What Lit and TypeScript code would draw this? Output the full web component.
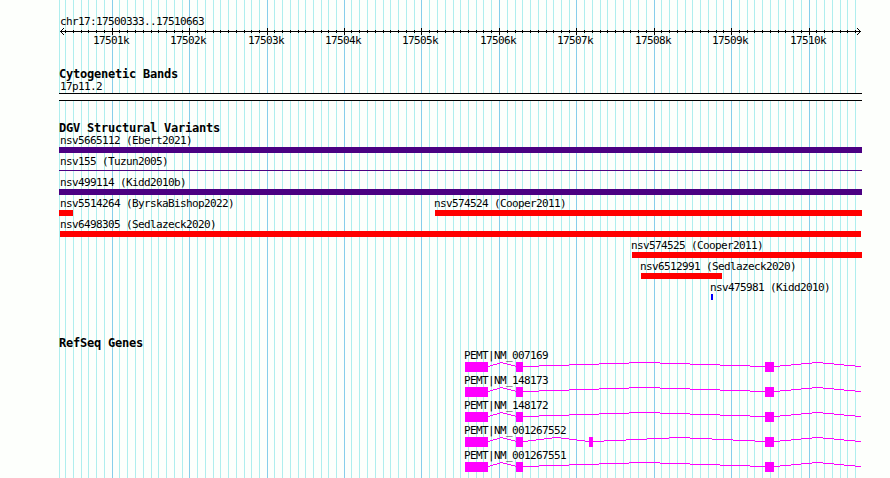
import { LitElement, css, html, svg } from "lit";
import { customElement, property } from "lit/decorators.js";

const LEFT = 59;
const MINOR = [
  59, 65, 73, 81, 88, 96, 104, 119, 127, 135, 143, 151, 158, 166, 174, 182, 197, 205, 213, 220, 228,
  236, 244, 251, 259, 274, 282, 290, 298, 305, 313, 321, 328, 336, 351, 359, 367, 375, 383, 390, 398,
  406, 414, 429, 437, 445, 453, 460, 468, 476, 483, 491, 507, 515, 522, 530, 538, 546, 553, 561, 569,
  584, 592, 600, 607, 615, 623, 630, 638, 646, 661, 669, 677, 685, 692, 700, 708, 716, 723, 739, 747,
  754, 762, 770, 778, 785, 793, 801, 816, 824, 832, 840, 847, 855,
];
const MAJOR = [112, 189, 267, 344, 421, 499, 576, 654, 731, 809];

const ticks = (xs: number[], y: number, h: number) => xs.map((x) => `M${x} ${y}h1v${h}h-1z`).join("");

interface Feature {
  name: string;
  labelX: number;
  start: number;
  end: number;
  kind: string;
}

const f = (name: string, labelX: number, start: number, end: number, kind: string): Feature => ({
  name, labelX, start, end, kind,
});

const VARIANTS: Feature[][] = [
  [f("nsv5665112 (Ebert2021)", 60, 59, 862, "complex")],
  [f("nsv155 (Tuzun2005)", 60, 59, 862, "thin")],
  [f("nsv499114 (Kidd2010b)", 60, 59, 862, "complex")],
  [
    f("nsv5514264 (ByrskaBishop2022)", 60, 59, 73, "loss"),
    f("nsv574524 (Cooper2011)", 434, 435, 862, "loss"),
  ],
  [f("nsv6498305 (Sedlazeck2020)", 60, 60, 861, "loss")],
  [f("nsv574525 (Cooper2011)", 631, 632, 862, "loss")],
  [f("nsv6512991 (Sedlazeck2020)", 640, 641, 722, "loss")],
  [f("nsv475981 (Kidd2010)", 710, 711, 713, "gain")],
];

const COMMON = [[465, 488], [516, 523], [765, 774]];
const GENES = [
  { name: "PEMT|NM_007169", exons: COMMON },
  { name: "PEMT|NM_148173", exons: COMMON },
  { name: "PEMT|NM_148172", exons: COMMON },
  { name: "PEMT|NM_001267552", exons: [[465, 488], [516, 523], [589, 593], [765, 774]] },
  { name: "PEMT|NM_001267551", exons: COMMON },
];

/** One-pixel stepped line between two points, as a filled path. */
function stepped(x0: number, y0: number, x1: number, y1: number) {
  let d = "";
  let from = x0;
  let last = y0;
  for (let x = x0; x <= x1; x++) {
    const y = Math.round(y0 + ((y1 - y0) * (x - x0)) / (x1 - x0));
    if (y !== last) {
      d += `M${from} ${last}H${x}v1H${from}z`;
      from = x;
      last = y;
    }
  }
  return d + `M${from} ${last}H${x1 + 1}v1H${from}z`;
}

@customElement("grid-lines")
class GridLines extends LitElement {
  static styles = css`
    :host { display: block; }
    svg { display: block; shape-rendering: crispEdges; }
    .minor { fill: #afeeee; }
    .major { fill: #87ceeb; }
  `;
  render() {
    return html`<svg width="890" height="478" aria-hidden="true">
      <path class="minor" d=${ticks(MINOR, 0, 478)}></path>
      <path class="major" d=${ticks(MAJOR, 0, 478)}></path>
    </svg>`;
  }
}

@customElement("scale-ruler")
class ScaleRuler extends LitElement {
  static styles = css`
    :host { display: block; }
    svg { display: block; shape-rendering: crispEdges; }
    .labels { display: grid; height: 13px; line-height: 11px; }
    .label { grid-area: 1 / 1; white-space: pre; }
  `;
  render() {
    return html`
      <svg width="890" height="7" aria-hidden="true">
        <path d="M60 3h801v1h-801z"></path>
        <path d=${ticks(MINOR.slice(1), 2, 3)}></path>
        <path d=${ticks(MAJOR, 0, 7)}></path>
        <path d="M61 2h1v3h-1zM62 1h1v1h-1zM62 5h1v1h-1zM63 0h1v1h-1zM63 6h1v1h-1z"></path>
        <path d="M859 2h1v3h-1zM858 1h1v1h-1zM858 5h1v1h-1zM857 0h1v1h-1zM857 6h1v1h-1z"></path>
      </svg>
      <div class="labels">
        ${MAJOR.map((x, i) => html`<span class="label" style="margin-left:${x - 19}px">${17501 + i}k</span>`)}
      </div>
    `;
  }
}

@customElement("variant-row")
class VariantRow extends LitElement {
  @property({ attribute: false }) features: Feature[] = [];
  static styles = css`
    :host { display: grid; height: 21px; }
    .feature { grid-area: 1 / 1; }
    .label { height: 13px; line-height: 13px; white-space: pre; }
    .bar { height: 6px; }
    .complex { background: #4b0082; }
    .thin { height: 1px; margin-top: 2px; background: #4b0082; }
    .loss { background: #ff0000; }
    .gain { background: #0000ff; }
  `;
  render() {
    return this.features.map(
      (v) => html`<div class="feature">
        <div class="label" style="margin-left:${v.labelX}px">${v.name}</div>
        <div class="bar ${v.kind}" style="margin-left:${v.start}px;width:${v.end - v.start}px"></div>
      </div>`,
    );
  }
}

@customElement("gene-row")
class GeneRow extends LitElement {
  @property() name = "";
  @property({ attribute: false }) exons: number[][] = [];
  static styles = css`
    :host { display: block; height: 25px; }
    .label { height: 13px; line-height: 13px; padding-left: 464px; white-space: pre; }
    svg { display: block; shape-rendering: crispEdges; fill: #ff00ff; }
  `;
  render() {
    const introns = this.exons.map(([, end], i) => {
      const last = i === this.exons.length - 1;
      const next = last ? 860 : this.exons[i + 1][0];
      const mid = Math.floor((end + next) / 2) - (i === 0 ? 1 : 0);
      return stepped(end, 4, mid, 0) + stepped(mid, 0, next, 4);
    });
    return html`
      <div class="label">${this.name}</div>
      <svg width="890" height="10" aria-hidden="true">
        <path d=${introns.join("")}></path>
        ${this.exons.map(([a, b]) => svg`<rect x=${a} y="0" width=${b - a} height="10"></rect>`)}
      </svg>
    `;
  }
}

@customElement("app-root")
class AppRoot extends LitElement {
  static styles = css`
    :host {
      display: grid;
      width: 890px;
      height: 478px;
      overflow: hidden;
      background: #fdfffc;
      color: #000;
      font-family: "DejaVu Sans Mono", "Liberation Mono", monospace;
      font-size: 11px;
      letter-spacing: -0.622px;
    }
    grid-lines, .tracks { grid-area: 1 / 1; }
    .tracks { z-index: 1; padding-top: 15px; min-height: 0; }
    .text { height: 13px; line-height: 13px; padding-left: 60px; white-space: pre; }
    .title {
      height: 13px;
      line-height: 13px;
      padding-left: 59px;
      font-size: 12px;
      font-weight: bold;
      letter-spacing: -0.224px;
      white-space: pre;
    }
    .cyto { margin-top: 20px; }
    .band {
      box-sizing: border-box;
      width: 803px;
      height: 8px;
      margin-left: ${LEFT}px;
      border: solid #000;
      border-width: 1px 0;
      background: #fdfffc;
    }
    .variants { margin-top: 21px; }
    .variants .title, .cyto .title { height: 12px; }
    .genes { margin-top: 35px; }
    .genes .title { height: 12px; }
  `;
  render() {
    return html`
      <grid-lines></grid-lines>
      <main class="tracks">
        <div class="text">chr17:17500333..17510663</div>
        <scale-ruler></scale-ruler>
        <section class="cyto">
          <div class="title">Cytogenetic Bands</div>
          <div class="text">17p11.2</div>
          <div class="band"></div>
        </section>
        <section class="variants">
          <div class="title">DGV Structural Variants</div>
          ${VARIANTS.map((row) => html`<variant-row .features=${row}></variant-row>`)}
        </section>
        <section class="genes">
          <div class="title">RefSeq Genes</div>
          ${GENES.map((g) => html`<gene-row .name=${g.name} .exons=${g.exons}></gene-row>`)}
        </section>
      </main>
    `;
  }
}
